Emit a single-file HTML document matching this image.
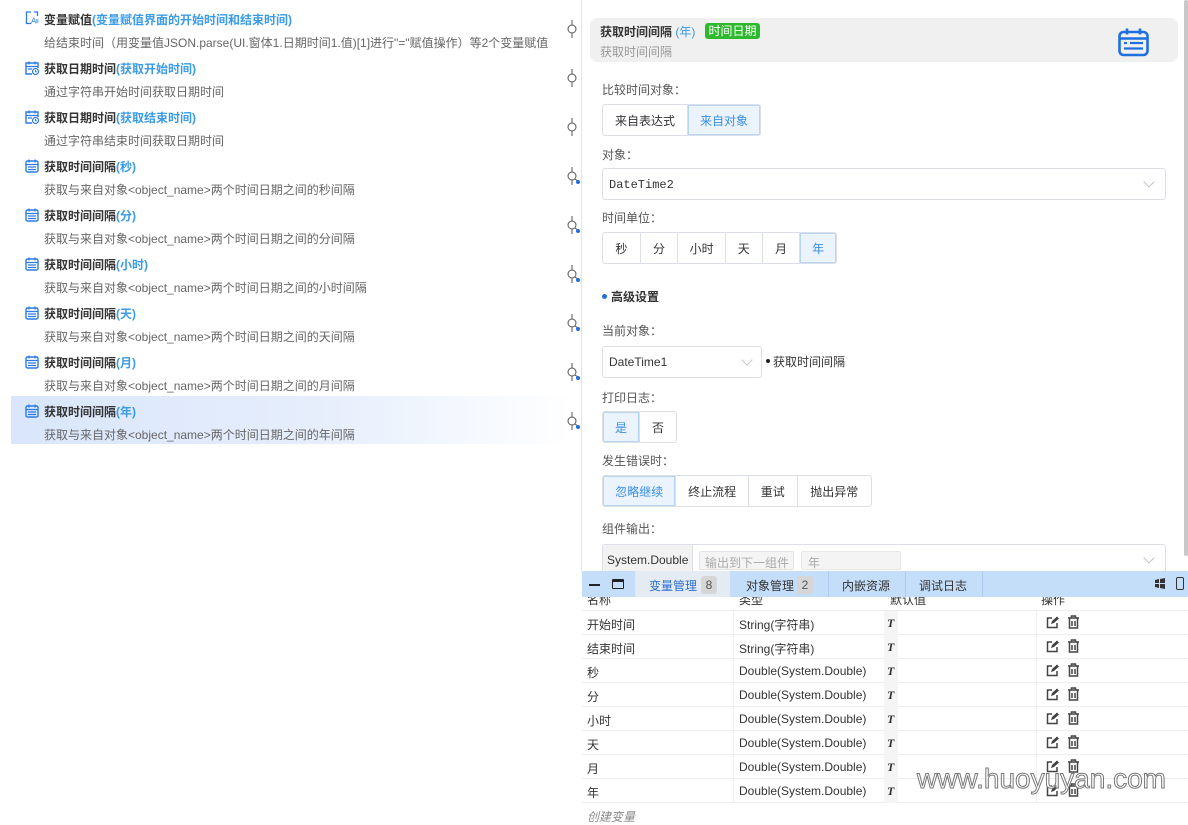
<!DOCTYPE html>
<html><head><meta charset="utf-8"><style>
*{box-sizing:border-box;margin:0;padding:0}
body{width:1188px;height:822px;overflow:hidden;background:#fff;font-family:"Liberation Sans","Noto Sans CJK SC",sans-serif;font-size:12px;color:#333;position:relative}
.a{position:absolute;white-space:nowrap}
.t{font-weight:bold;color:#333;font-size:12px}
.t span{color:#3a9be8;font-weight:bold}
.d{color:#666;font-size:12px}
.lbl{color:#555;font-size:12px}
.bg{position:absolute;display:flex;border:1px solid #dcdfe6;border-radius:3px;overflow:hidden;background:#fff}
.bg div{display:flex;align-items:center;justify-content:center;border-left:1px solid #dcdfe6;color:#333;font-size:12px;height:100%}
.bg div:first-child{border-left:none}
.bg div.on{background:#eaf3fe;color:#3a8ee6;box-shadow:inset 0 0 0 1px #b8d6f4}
.sel{position:absolute;border:1px solid #dcdfe6;border-radius:3px;background:#fff}
.chev{position:absolute;width:8px;height:8px;border-right:1px solid #c0c4cc;border-bottom:1px solid #c0c4cc;transform:rotate(45deg)}
.row{position:absolute;left:582px;width:606px;height:24px;border-bottom:1px solid #eee}
.row .c{position:absolute;top:5px;font-size:12px;color:#333}
</style></head><body>

<div class="a" style="left:11px;top:396px;width:560px;height:48px;background:linear-gradient(90deg,#d9e6fb 0%,#e6eefc 55%,#fff 100%)"></div>
<svg class="a" style="left:25px;top:11px" width="14" height="14" viewBox="0 0 14 14"><path d="M6 1H1.5v11.5H6M9 1h3.5v4" fill="none" stroke="#2c7be5" stroke-width="1.3"/><text x="6" y="12.5" font-size="8" fill="#2c7be5" font-family="Liberation Sans">A</text><path d="M11 9h2.5M11 11h2.5" stroke="#2c7be5"/></svg>
<div class="a t" style="left:44px;top:11px">变量赋值<span>(变量赋值界面的开始时间和结束时间)</span></div>
<div class="a d" style="left:44px;top:34px">给结束时间（用变量值JSON.parse(UI.窗体1.日期时间1.值)[1]进行"="赋值操作）等2个变量赋值</div>

<div id="L"></div>

<div class="a" style="left:581px;top:0;width:1px;height:571px;background:#e4e4e4"></div>

<div class="a" style="left:590px;top:18px;width:588px;height:44px;background:#f0f0f0;border-radius:8px"></div>
<div class="a t" style="left:600px;top:23px">获取时间间隔 <span style="font-weight:normal;color:#3a9be8">(年)</span></div>
<div class="a" style="left:705px;top:23px;width:55px;height:16px;background:#2eb82e;color:#fff;border-radius:3px;font-size:12px;line-height:16px;text-align:center">时间日期</div>
<div class="a" style="left:600px;top:43px;color:#999">获取时间间隔</div>
<svg class="a" style="left:1118px;top:28px" width="31" height="29" viewBox="0 0 31 29"><rect x="1.5" y="4" width="28" height="23" rx="4" fill="none" stroke="#1f6fe0" stroke-width="2.6"/><path d="M1.5 10.5h28M9 0.5v6M22 0.5v6" stroke="#1f6fe0" stroke-width="2.6"/><path d="M6 15h3M12 15h13M6 20.5h19" stroke="#1f6fe0" stroke-width="2.2"/></svg>

<div class="a lbl" style="left:602px;top:81px">比较时间对象：</div>
<div class="bg" style="left:602px;top:104px;width:159px;height:32px"><div style="width:85px">来自表达式</div><div class="on" style="width:74px">来自对象</div></div>
<div class="a lbl" style="left:602px;top:146px">对象：</div>
<div class="sel" style="left:602px;top:168px;width:564px;height:32px"><div class="a" style="left:6px;top:9px;font-family:'Liberation Mono',monospace;font-size:12px;color:#333">DateTime2</div><div class="chev" style="left:542px;top:9px"></div></div>
<div class="a lbl" style="left:602px;top:209px">时间单位：</div>
<div class="bg" style="left:602px;top:232px;width:235px;height:32px"><div style="width:37px">秒</div><div style="width:38px">分</div><div style="width:48px">小时</div><div style="width:37px">天</div><div style="width:38px">月</div><div class="on" style="width:37px">年</div></div>

<div class="a" style="left:602px;top:294px;width:5px;height:5px;border-radius:50%;background:#1f6fe0"></div>
<div class="a" style="left:611px;top:288px;font-weight:bold;color:#333">高级设置</div>
<div class="a lbl" style="left:602px;top:322px">当前对象：</div>
<div class="sel" style="left:602px;top:346px;width:160px;height:32px"><div class="a" style="left:6px;top:8px;color:#333">DateTime1</div><div class="chev" style="left:140px;top:9px"></div></div>
<div class="a" style="left:766px;top:359px;width:4px;height:4px;border-radius:50%;background:#222"></div>
<div class="a" style="left:773px;top:353px;color:#333">获取时间间隔</div>
<div class="a lbl" style="left:602px;top:389px">打印日志：</div>
<div class="bg" style="left:602px;top:411px;width:75px;height:32px"><div class="on" style="width:37px">是</div><div style="width:38px">否</div></div>
<div class="a lbl" style="left:602px;top:452px">发生错误时：</div>
<div class="bg" style="left:602px;top:475px;width:270px;height:32px"><div class="on" style="width:73px">忽略继续</div><div style="width:73px">终止流程</div><div style="width:49px">重试</div><div style="width:75px">抛出异常</div></div>
<div class="a lbl" style="left:602px;top:520px">组件输出：</div>
<div class="sel" style="left:602px;top:544px;width:564px;height:32px;overflow:hidden"><div class="a" style="left:0;top:0;width:90px;height:32px;background:#f2f2f2;border-right:1px solid #dcdfe6;color:#333;padding:8px 0 0 4px">System.Double</div><div class="a" style="left:96px;top:6px;width:95px;height:19px;background:#f4f4f4;border:1px solid #e4e4e4;border-radius:2px;color:#aaa;padding:2px 5px">输出到下一组件</div><div class="a" style="left:198px;top:6px;width:100px;height:19px;background:#f4f4f4;border:1px solid #e8e8e8;border-radius:2px;color:#aaa;padding:2px 6px">年</div><div class="chev" style="left:542px;top:9px"></div></div>
<div class="a" style="left:1184px;top:0;width:4px;height:556px;background:#c8c8c8;border-radius:2px"></div>

<div class="a" style="left:582px;top:571px;width:606px;height:26px;background:#c4ddf8"></div>
<div class="a" style="left:589px;top:584px;width:11px;height:1.5px;background:#222"></div>
<div class="a" style="left:612px;top:579px;width:12px;height:10px;border:1.5px solid #222;border-top-width:3px;border-radius:1px"></div>
<div class="a" style="left:635px;top:571px;width:95px;height:26px;background:#e5ebf2"></div>
<div class="a" style="left:649px;top:577px;color:#2b6fd6;font-size:12px">变量管理</div>
<div class="a" style="left:701px;top:576px;width:16px;height:18px;background:#d6d6d6;border-radius:3px;text-align:center;line-height:18px;color:#555">8</div>
<div class="a" style="left:746px;top:577px;color:#333">对象管理</div>
<div class="a" style="left:797px;top:576px;width:16px;height:18px;background:#d6d6d6;border-radius:3px;text-align:center;line-height:18px;color:#555">2</div>
<div class="a" style="left:828px;top:571px;width:1px;height:26px;background:#aecbee"></div>
<div class="a" style="left:842px;top:577px;color:#333">内嵌资源</div>
<div class="a" style="left:905px;top:571px;width:1px;height:26px;background:#aecbee"></div>
<div class="a" style="left:919px;top:577px;color:#333">调试日志</div>
<div class="a" style="left:982px;top:571px;width:1px;height:26px;background:#aecbee"></div>
<svg class="a" style="left:1154px;top:578px" width="12" height="11" viewBox="0 0 12 11"><path d="M1 2l4-1v4H1zM6 1l5-1v5H6zM1 6h4v4l-4-1zM6 6h5v5l-5-1z" fill="#333"/></svg>
<div class="a" style="left:1176px;top:577px;width:8px;height:13px;border:1.5px solid #333;border-radius:2px"></div>

<div class="a" style="left:582px;top:597px;width:606px;height:14px;overflow:hidden"><div class="a" style="left:5px;top:-6px;color:#333">名称</div><div class="a" style="left:157px;top:-6px;color:#333">类型</div><div class="a" style="left:308px;top:-6px;color:#333">默认值</div><div class="a" style="left:459px;top:-6px;color:#333">操作</div></div>
<div class="a" style="left:582px;top:610px;width:606px;height:1px;background:#eee"></div>
<div id="R"></div>
<div class="a" style="left:587px;top:808px;color:#888;font-style:italic">创建变量</div>

<div class="a" style="left:917px;top:763px;font-size:28px;letter-spacing:0;color:#fff;-webkit-text-stroke:1px #777;font-family:'Liberation Sans',sans-serif">www.huoyuyan.com</div>

<script>
var L=document.getElementById('L'),h='';
var items=[['获取日期时间','获取开始时间','通过字符串开始时间获取日期时间',0],['获取日期时间','获取结束时间','通过字符串结束时间获取日期时间',0],['获取时间间隔','秒','秒',1],['获取时间间隔','分','分',1],['获取时间间隔','小时','小时',1],['获取时间间隔','天','天',1],['获取时间间隔','月','月',1],['获取时间间隔','年','年',1]];
var cal='<svg width="14" height="14" viewBox="0 0 14 14"><rect x="1" y="2" width="12" height="11" rx="1.5" fill="none" stroke="#2c7be5" stroke-width="1.4"/><path d="M1 5.5h12M4 0.5v3M10 0.5v3M3 8h8M3 10.5h8" stroke="#2c7be5" stroke-width="1.3"/></svg>';
var calc='<svg width="14" height="14" viewBox="0 0 14 14"><path d="M7 13H1V2h12v5" fill="none" stroke="#2c7be5" stroke-width="1.4"/><path d="M1 5.5h12M4 0.5v3M10 0.5v3M3 8h4" stroke="#2c7be5" stroke-width="1.3"/><circle cx="10.5" cy="10.5" r="3" fill="#fff" stroke="#2c7be5" stroke-width="1.2"/><path d="M10.5 9v1.7h1.3" fill="none" stroke="#2c7be5"/></svg>';
function con(y,dot){return '<svg class="a" style="left:565px;top:'+(y-9)+'px" width="16" height="20" viewBox="0 0 16 20"><path d="M7 1v5M7 14v5" stroke="#555"/><circle cx="7" cy="10" r="4" fill="#fff" stroke="#555"/>'+(dot?'<path d="M10 13l3 2" stroke="#555"/><circle cx="13" cy="16" r="2" fill="#1f6fe0"/>':'')+'</svg>';}
h+=con(28,0);
for(var i=0;i<8;i++){var y=60+i*49,it=items[i];
h+='<div class="a" style="left:25px;top:'+(y+1)+'px">'+(it[3]?cal:calc)+'</div>';
h+='<div class="a t" style="left:44px;top:'+y+'px">'+it[0]+'<span>('+it[1]+')</span></div>';
h+='<div class="a d" style="left:44px;top:'+(y+23)+'px">'+(it[3]?'获取与来自对象&lt;object_name&gt;两个时间日期之间的'+it[2]+'间隔':it[2])+'</div>';
h+=con(y+17,it[3]);}
L.innerHTML=h;
var R=document.getElementById('R');h='';
var rows=[['开始时间','String(字符串)'],['结束时间','String(字符串)'],['秒','Double(System.Double)'],['分','Double(System.Double)'],['小时','Double(System.Double)'],['天','Double(System.Double)'],['月','Double(System.Double)'],['年','Double(System.Double)']];
for(var j=0;j<8;j++){var y=611+j*24;
h+='<div class="row" style="top:'+y+'px"><div class="a" style="left:151px;top:0;width:1px;height:24px;background:#eee"></div><div class="a" style="left:302px;top:0;width:14px;height:24px;background:#f5f5f5"></div><div class="a" style="left:454px;top:0;width:1px;height:24px;background:#eee"></div><div class="c" style="left:5px">'+rows[j][0]+'</div><div class="c" style="left:157px">'+rows[j][1]+'</div><div class="c" style="left:305px;font-weight:bold;font-style:italic;font-family:\'Liberation Serif\',serif">T</div>';
h+='<svg class="a" style="left:464px;top:5px" width="13" height="13" viewBox="0 0 13 13"><path d="M6 2H1.5v9.5H11V7" fill="none" stroke="#444" stroke-width="1.5"/><path d="M5 8l1-3 5-4.5 2 2L8 7z" fill="#444"/></svg><svg class="a" style="left:485px;top:4px" width="13" height="14" viewBox="0 0 13 14"><path d="M1 3h11M4.5 3V1h4v2M2.5 3.5v9.5h8V3.5M5 6v5M8 6v5" fill="none" stroke="#444" stroke-width="1.5"/></svg></div>';}
R.innerHTML=h;
</script>
</body></html>
